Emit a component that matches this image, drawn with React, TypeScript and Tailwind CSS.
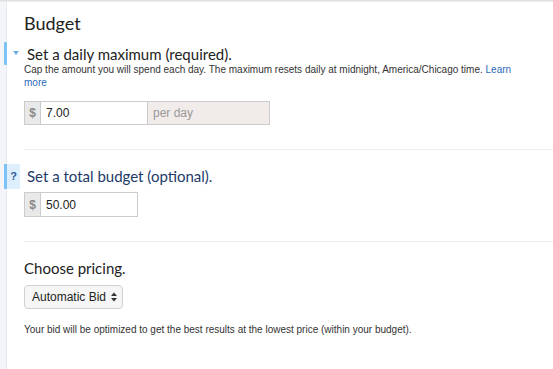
import React from "react";

export default function App() {
  return (
    <div className="relative w-[553px] h-[369px] bg-white overflow-hidden flex" style={{ fontFamily: '"Liberation Sans", Arial, sans-serif' }}>
      <div className="absolute left-0 right-0 top-0 h-[2px] bg-gradient-to-b from-[#d9d9d9] to-[#f4f4f4]" />
      <div className="w-[7px] shrink-0 bg-[#f3f5f8] border-r border-[#e6e9ee]" />
      <div className="flex-1 pl-[17px] pt-[11px]">
        <h1 className="text-[18px] leading-[24px] text-[#222] font-['Lato',sans-serif]">Budget</h1>

        <div className="relative mt-[10px]">
          <div className="absolute left-[-20px] top-[-3px] w-[3px] h-[23px] bg-[#7cc2f4] rounded-[1px]" />
          <div className="absolute left-[-11px] top-[6px] w-0 h-0 border-l-[3px] border-r-[3px] border-t-[4px] border-l-transparent border-r-transparent border-t-[#6aaee6]" />
          <h2 className="pl-[3px] text-[15px] leading-[18px] text-[#222] font-['Lato',sans-serif]">Set a daily maximum (required).</h2>
          <p className="mt-[0px] w-[500px] text-[10px] leading-[13px] text-[#333]">
            Cap the amount you will spend each day. The maximum resets daily at midnight, America/Chicago time.{" "}
            <a className="text-[#2a6ab8]">Learn<br />more</a>
          </p>
          <div className="mt-[12px] flex w-[246px] h-[24px] border border-[#ccc] text-[12px]">
            <div className="w-[16px] flex items-center justify-center bg-[#e9e9e9] border-r border-[#ccc] text-[#888] font-bold">$</div>
            <div className="w-[106px] flex items-center pl-[5px] text-[#222]">7.00</div>
            <div className="flex-1 flex items-center pl-[5px] bg-[#f1ebea] border-l border-[#ccc] text-[#999]">per day</div>
          </div>
        </div>

        <div className="mt-[24px] h-px bg-[#eeeeee]" />

        <div className="relative mt-[15px]">
          <div className="absolute left-[-20px] top-[-1px] w-[16px] h-[25px] bg-[#ddeefc] flex">
            <div className="w-[3px] h-full bg-[#7cc2f4]" />
            <div className="flex-1 flex items-center justify-center text-[11px] font-bold text-[#2e5c98]">?</div>
          </div>
          <h2 className="pl-[3px] pt-[2px] text-[15px] leading-[18px] text-[#1d3a68] font-['Lato',sans-serif]">Set a total budget (optional).</h2>
          <div className="mt-[7px] flex w-[114px] h-[25px] border border-[#ccc] text-[12px]">
            <div className="w-[16px] flex items-center justify-center bg-[#e9e9e9] border-r border-[#ccc] text-[#888] font-bold">$</div>
            <div className="flex-1 flex items-center pl-[5px] text-[#222]">50.00</div>
          </div>
        </div>

        <div className="mt-[24px] h-px bg-[#eeeeee]" />

        <h2 className="mt-[17px] text-[15px] leading-[18px] text-[#222] font-['Lato',sans-serif]">Choose pricing.</h2>
        <div className="mt-[8px] w-[99px] h-[24px] rounded-[4px] border border-[#d0d0d0] bg-[#f6f6f6] flex items-center pl-[7px] text-[12px] text-[#222]">
          <span>Automatic Bid</span>
          <svg className="ml-auto mr-[5px]" width="6" height="10" viewBox="0 0 6 10">
            <path d="M0 4 L3 0.5 L6 4 Z" fill="#333" />
            <path d="M0 6 L3 9.5 L6 6 Z" fill="#333" />
          </svg>
        </div>
        <p className="mt-[14px] text-[10px] leading-[13px] text-[#333]">
          Your bid will be optimized to get the best results at the lowest price (within your budget).
        </p>
      </div>
    </div>
  );
}
